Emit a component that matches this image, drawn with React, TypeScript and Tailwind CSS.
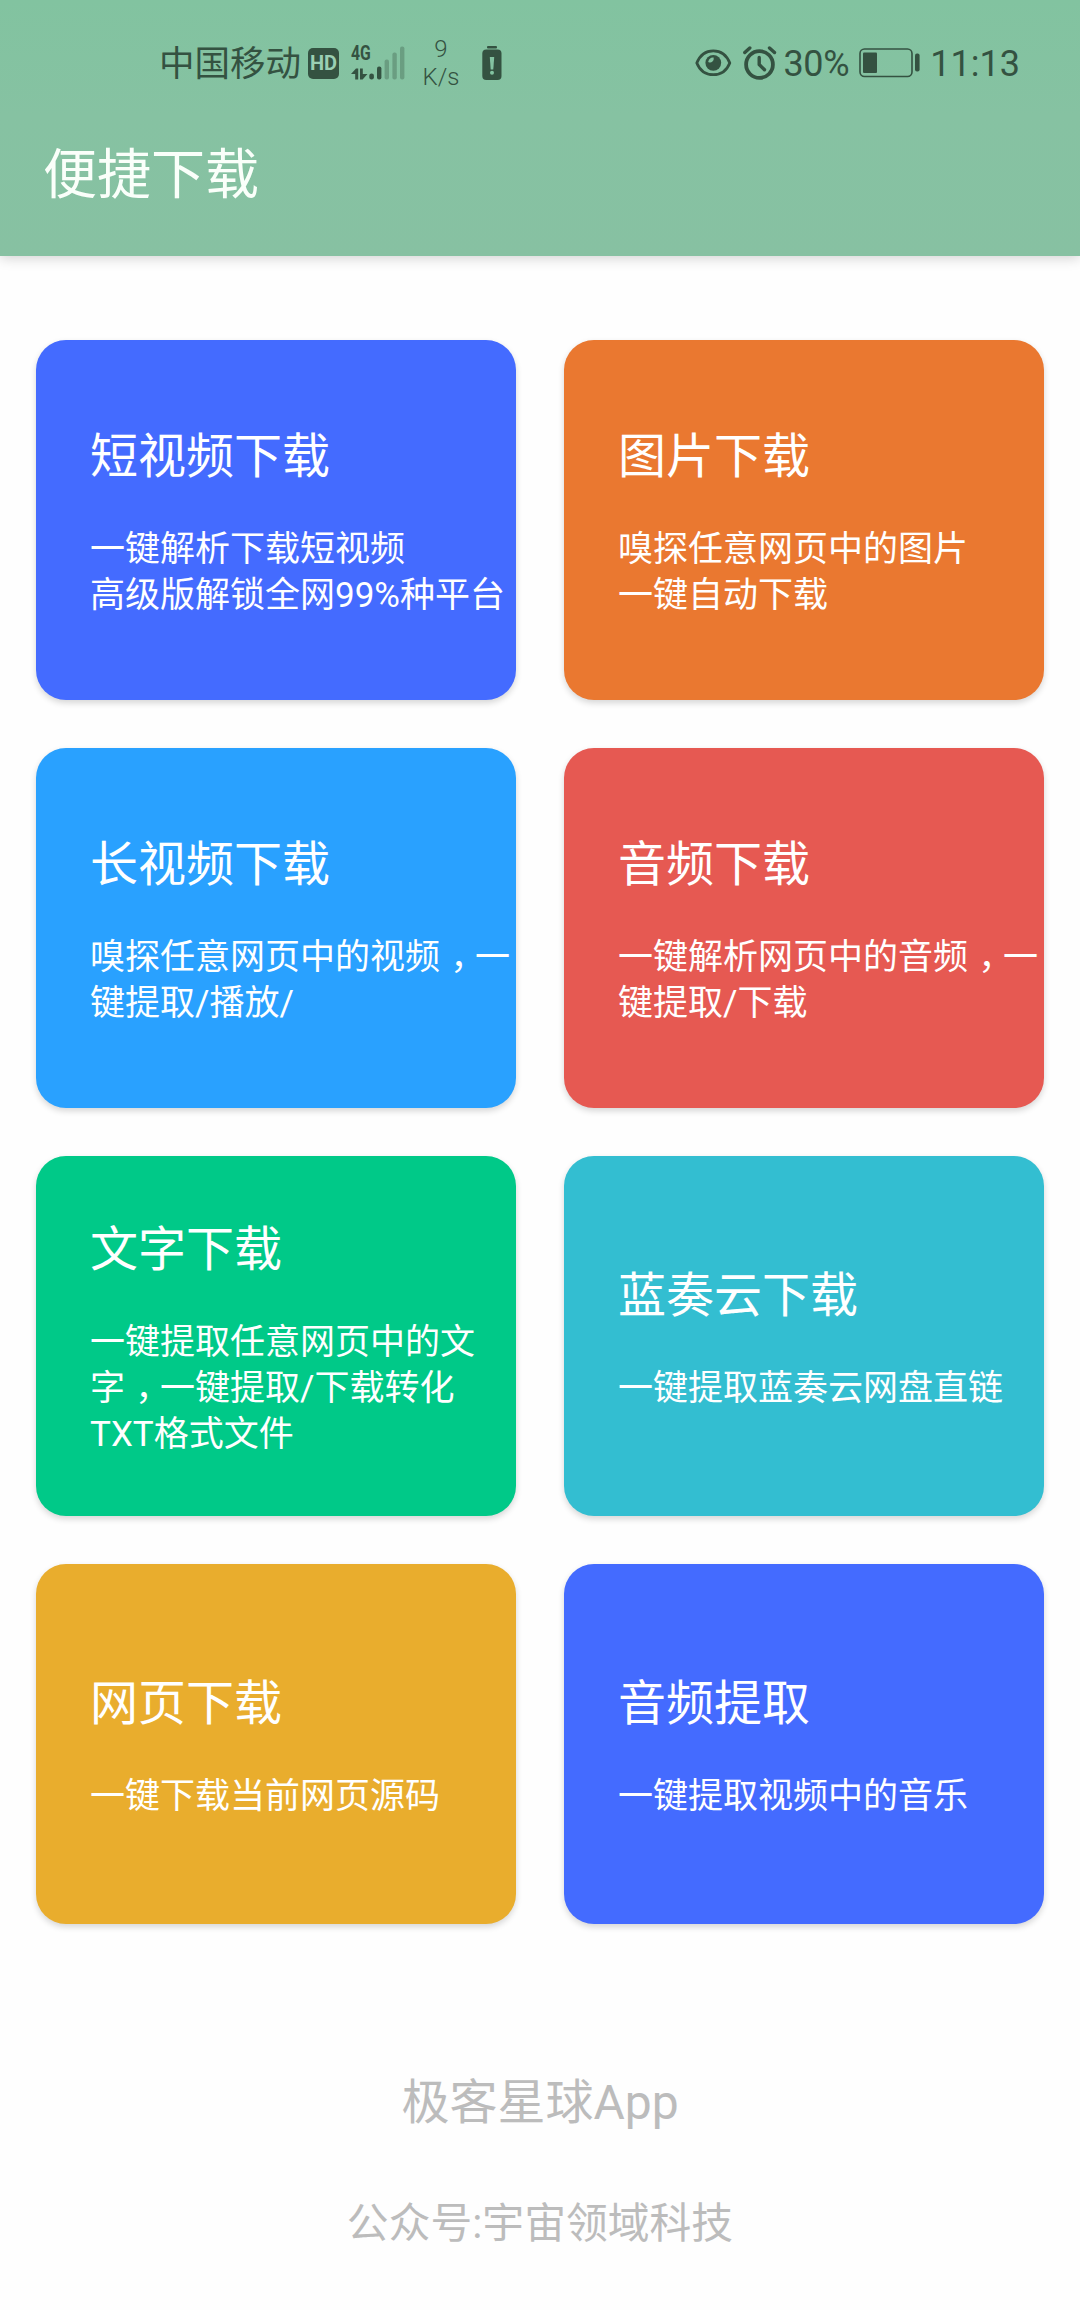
import React from "react";

type Card = { title: string; lines: string[]; color: string };

const cards: Card[] = [
  { title: "短视频下载", lines: ["一键解析下载短视频", "高级版解锁全网99%种平台"], color: "bg-[#446bff]" },
  { title: "图片下载", lines: ["嗅探任意网页中的图片", "一键自动下载"], color: "bg-[#ea7830]" },
  { title: "长视频下载", lines: ["嗅探任意网页中的视频，一", "键提取/播放/"], color: "bg-[#29a1ff]" },
  { title: "音频下载", lines: ["一键解析网页中的音频，一", "键提取/下载"], color: "bg-[#e65952]" },
  { title: "文字下载", lines: ["一键提取任意网页中的文", "字，一键提取/下载转化", "TXT格式文件"], color: "bg-[#00c988]" },
  { title: "蓝奏云下载", lines: ["一键提取蓝奏云网盘直链"], color: "bg-[#33bed1]" },
  { title: "网页下载", lines: ["一键下载当前网页源码"], color: "bg-[#e9ad2d]" },
  { title: "音频提取", lines: ["一键提取视频中的音乐"], color: "bg-[#446bff]" },
];

/* Commas are set half-width and centred in a full-width cell. */
function Line({ text }: { text: string }) {
  const parts = text.split("，");
  return (
    <p className="whitespace-nowrap">
      {parts.map((part, i) => (
        <React.Fragment key={i}>
          {i > 0 && (
            <span className="inline-block w-[35px] pl-[3px] text-center [font-feature-settings:'halt']">，</span>
          )}
          {part}
        </React.Fragment>
      ))}
    </p>
  );
}

function FeatureCard({ card }: { card: Card }) {
  return (
    <section
      className={
        "flex h-[360px] flex-col justify-center overflow-hidden rounded-[30px] pt-[2px] pl-[54px] text-white shadow-[0_3px_6px_rgba(0,0,0,0.16)] " +
        card.color
      }
    >
      <h2 className="text-[48px] leading-[68px]">{card.title}</h2>
      <div className="mt-9 text-[35px] leading-[46px]">
        {card.lines.map((line) => (
          <Line key={line} text={line} />
        ))}
      </div>
    </section>
  );
}

function HdIcon() {
  return (
    <span className="ml-[4px] flex h-[31px] w-[31px] items-center justify-center rounded-[5px] bg-[#345241] font-[Roboto] text-[20px] leading-none font-bold text-[#9bcfb3]">
      HD
    </span>
  );
}

function SignalIcon() {
  return (
    <div className="relative ml-[12px] h-[34px] w-[54px]">
      <span className="absolute top-[-2px] left-0 origin-left scale-x-75 font-[Roboto] text-[21px] leading-[18px] font-bold">4G</span>
      <svg className="absolute inset-0" width="54" height="34" viewBox="0 0 54 34" fill="#345241">
        <path d="M0 28 5 22.5h2.2V33.5H4.2V28ZM9 22.5h2.8V28H16.5L11.6 33.5H9Z" />
        <rect x="18.3" y="27.5" width="4.6" height="6" rx="2.2" />
        <rect x="26" y="20.5" width="4.4" height="13" rx="2" />
        <g opacity="0.32">
          <rect x="33.6" y="13.5" width="4.4" height="20" rx="2" />
          <rect x="41.4" y="6.5" width="4.4" height="27" rx="2" />
          <rect x="49" y="0.5" width="4.4" height="33" rx="2" />
        </g>
      </svg>
    </div>
  );
}

function BatteryAlertIcon() {
  return (
    <svg className="ml-[20px]" width="20" height="36" viewBox="0 0 20 36" fill="#345241">
      <rect x="5" y="1" width="10" height="2.4" rx="1" />
      <rect x="0.3" y="4.6" width="19.2" height="30.4" rx="4" />
      <path d="M7.8 12h4.4l-.9 12.5H8.7Z" fill="#83c3a1" />
      <circle cx="10" cy="27.8" r="2" fill="#83c3a1" />
    </svg>
  );
}

function EyeIcon() {
  return (
    <svg width="37" height="28" viewBox="0 0 37 28" fill="none">
      <path d="M1.8 14C5 6 11 1.8 18.3 1.8S31.6 6 34.8 14C31.6 22 25.6 25.7 18.3 25.7S5 22 1.8 14Z" stroke="#345241" strokeWidth="2.8" strokeLinejoin="round" />
      <circle cx="18.3" cy="13.8" r="7.9" fill="#345241" />
      <path d="M14 12.6A4.5 4.5 0 0 1 18 9.2 3 3 0 0 1 14 12.6Z" stroke="#83c3a1" strokeWidth="1.4" fill="#83c3a1" />
    </svg>
  );
}

function AlarmIcon() {
  return (
    <svg className="ml-[11px]" width="34" height="34" viewBox="0 0 34 34" fill="none" stroke="#345241" strokeLinecap="round">
      <circle cx="16.5" cy="18.5" r="13.4" strokeWidth="3.8" />
      <path d="M1.8 6.5 6.8 2M31.5 6.5 26.5 2" strokeWidth="3.4" />
      <path d="M16.2 11.5V18.5L21.5 23.8" strokeWidth="3.4" strokeLinejoin="round" />
    </svg>
  );
}

function BatteryIcon() {
  return (
    <svg className="ml-[10px]" width="62" height="30" viewBox="0 0 62 30" fill="none">
      <rect x="1" y="1" width="52" height="27.5" rx="4.5" stroke="#345241" strokeWidth="1.6" />
      <rect x="4" y="4.5" width="14" height="20.5" rx="1" fill="#345241" />
      <rect x="56" y="5.5" width="4.6" height="18" rx="2" fill="#345241" />
    </svg>
  );
}

export default function App() {
  return (
    <div className="flex h-[2310px] w-[1080px] flex-col overflow-hidden bg-[#fefefe] font-[Roboto,'Noto_Sans_CJK_SC',sans-serif]" lang="zh-CN">
      <header className="h-[256px] shrink-0 bg-linear-to-b from-[#82c3a0] via-[#86c2a2] via-45% to-[#87c1a2] shadow-[0_2px_12px_rgba(0,0,0,0.18)]">
        <div className="flex h-[105px] items-center justify-between pt-[21px] pr-[60px] pl-[159px] text-[#345241]">
          <div className="flex items-center">
            <span className="w-[145px] pt-[2px] text-[35.5px] leading-[44px]">中国移动</span>
            <HdIcon />
            <SignalIcon />
            <div className="ml-[15px] flex w-[42px] flex-col items-center text-[24px] leading-[28px] font-[350]">
              <span>9</span>
              <span>K/s</span>
            </div>
            <BatteryAlertIcon />
          </div>
          <div className="flex items-center text-[36px] leading-[44px]">
            <EyeIcon />
            <AlarmIcon />
            <span className="ml-[6px] pt-[2px] tracking-[-0.3px]">30%</span>
            <BatteryIcon />
            <span className="ml-[9px] pt-[2px]">11:13</span>
          </div>
        </div>
        <h1 className="pt-[37px] pl-[43px] text-[54px] leading-[68px] text-[#fafffa]">便捷下载</h1>
      </header>

      <main className="grid grid-cols-2 gap-12 px-9 pt-[84px]">
        {cards.map((card) => (
          <FeatureCard key={card.title} card={card} />
        ))}
      </main>

      <footer className="flex flex-col items-center pt-[145px] text-[#bcbcbc]">
        <p className="text-[48px] leading-[68px]">极客星球App</p>
        <p className="mt-[56px] text-[41.8px] leading-[62px]">公众号:宇宙领域科技</p>
      </footer>
    </div>
  );
}
